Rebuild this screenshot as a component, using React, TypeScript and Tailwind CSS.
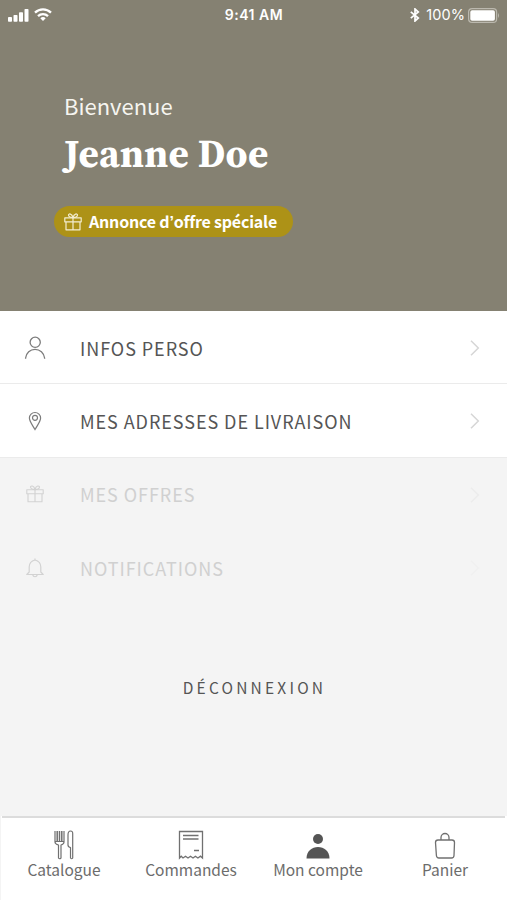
import type { ReactNode } from "react";

const sans = "font-['Noto_Sans_CJK_SC','Noto_Sans',sans-serif]";

const UserIcon = () => (
  <svg width="22" height="24" viewBox="0 0 22 24" fill="none" stroke="#7c7c7c" strokeWidth="1.3" className="block">
    <circle cx="11.2" cy="6.300" r="5.100" />
    <path d="M1.600 22.700V22C2.300 17 6 13.300 11 13.300s8.900 3.700 9.600 8.700v.7" />
  </svg>
);

const PinIcon = () => (
  <svg width="22" height="24" viewBox="0 0 22 24" fill="none" stroke="#7c7c7c" strokeWidth="1.2" className="block">
    <path d="M11 20.500C8.500 16.100 5.400 12.500 5.400 9.100a5.600 5.600 0 0 1 11.200 0c0 3.400-3.100 7-5.600 11.400Z" />
    <circle cx="11" cy="8.800" r="2.500" />
  </svg>
);

const GiftIcon = ({ color, width = 1.1 }: { color: string; width?: number }) => (
  <svg width="18" height="18" viewBox="0 0 18 18" fill="none" stroke={color} strokeWidth={width} strokeLinejoin="round" className="block">
    <path d="M.8 4.800h16.400v4H.8zM2 8.800v8h14v-8M9 4.800v12" />
    <path d="M9 4.600C7 4.600 4.500 3.800 4.500 2.100 4.500.4 8 .2 9 4.600c1-4.400 4.500-4.200 4.500-2.500C13.500 3.800 11 4.600 9 4.600Z" />
  </svg>
);

const BellIcon = () => (
  <svg width="18" height="20" viewBox="0 0 18 20" fill="none" stroke="#d2d2d2" strokeWidth="1.2" strokeLinejoin="round" className="block">
    <path d="M9 .5v1.500M9 2C5.200 3 3.200 5.500 3.200 9V14L.8 16.500h16.400L14.800 14V9C14.800 5.500 12.800 3 9 2ZM6.800 16.800c.4 2.600 4 2.600 4.400 0" />
  </svg>
);

const Chevron = ({ color }: { color: string }) => (
  <svg width="10" height="18" viewBox="0 0 10 18" fill="none" stroke={color} strokeWidth="1.500" className="mt-[2px] block">
    <path d="M1 1.800 8.300 9 1 16.200" />
  </svg>
);

const Row = ({ icon, label, muted = false, arrow }: { icon: ReactNode; label: string; muted?: boolean; arrow: string }) => (
  <div className={`flex h-[73.3px] items-center border-b pr-[27px] ${muted ? "border-transparent text-[#d0d0d0]" : "border-[#ebebeb] bg-white text-[#555]"}`}>
    <div className="flex w-[70px] justify-center pt-px">{icon}</div>
    <span className="ml-[10px] flex-1 pt-[1px] text-[18px] leading-6 tracking-[0.940px]">{label}</span>
    <Chevron color={arrow} />
  </div>
);

const Tab = ({ icon, label }: { icon: ReactNode; label: string }) => (
  <div className="flex w-[127px] shrink-0 flex-col items-center">
    <div className="flex h-[30px] items-center">{icon}</div>
    <span className="-mt-[3px] text-[15.500px] leading-6 whitespace-nowrap">{label}</span>
  </div>
);

export default function App() {
  return (
    <div className={`flex h-[900px] w-[507px] flex-col overflow-hidden bg-[#f4f4f4] ${sans}`}>
      <header className="h-[311px] bg-[#858172] text-white">
        <div className="grid h-[30px] grid-cols-3 items-center pr-[7px] pl-2 font-[Inter,sans-serif]">
          <div className="flex items-center gap-[5px]">
            <svg width="21" height="13" viewBox="0 0 21 13" fill="white">
              <rect x="0" y="8" width="4" height="4.700" rx=".8" />
              <rect x="5.500" y="6" width="4" height="6.700" rx=".8" />
              <rect x="11" y="3.300" width="4" height="9.400" rx=".8" />
              <rect x="16.500" y="0" width="4" height="12.700" rx=".8" />
            </svg>
            <svg width="18" height="13" viewBox="0 0 18 13" fill="none" stroke="white" strokeWidth="2.300" className="-mt-px">
              <path d="M1 4.700a11.500 11.500 0 0 1 16 0M4 8.100a7.200 7.200 0 0 1 10 0" />
              <path d="M6.300 10.200a4 4 0 0 1 5.400 0L9 12.900Z" fill="white" stroke="none" />
            </svg>
          </div>
          <span className="-mt-px text-center text-[14px] font-semibold tracking-[0.500px] whitespace-nowrap">9:41 AM</span>
          <div className="flex items-center justify-end">
            <svg width="10" height="14" viewBox="0 0 10 14" fill="none" stroke="white" strokeWidth="1.700" className="mr-[6px]">
              <path d="M.8 3.800 8.300 10 5 13V1l3.300 3L.8 10.200" />
            </svg>
            <span className="mr-[3px] text-[14.500px] tracking-[0.100px]">100%</span>
            <svg width="32" height="15" viewBox="0 0 32 15">
              <rect x=".6" y=".6" width="28" height="13.800" rx="3.500" fill="none" stroke="#bbb8ae" strokeWidth="1.200" />
              <rect x="2.300" y="2.300" width="24.600" height="10.400" rx="1.800" fill="white" />
              <path d="M30 5v5q2-2.500 0-5" fill="#bbb8ae" />
            </svg>
          </div>
        </div>
        <div className="pt-[59px] pl-[64px]">
          <p className="text-[22px] leading-[32px] text-[#f6f5f0]">Bienvenue</p>
          <h1 className="mt-[11px] font-['Source_Serif_4','Source_Serif_Pro','Noto_Serif_CJK_SC','Liberation_Serif',serif] text-[39px] leading-[44px] font-bold tracking-[0.250px]">Jeanne Doe</h1>
        </div>
        <div className="mt-[30px] ml-[54px] flex h-[31px] w-[239px] items-center rounded-full bg-[#ad9217] pl-[10px]">
          <GiftIcon color="#f3edcf" width={1.2} />
          <span className="ml-[7px] text-[16px] leading-6 font-bold tracking-[-0.200px] whitespace-nowrap">
            Annonce d<span className="font-['Liberation_Sans',sans-serif]">’</span>offre spéciale
          </span>
        </div>
      </header>
      <main className="flex-1">
        <Row icon={<UserIcon />} label="INFOS PERSO" arrow="#d6d6d6" />
        <Row icon={<PinIcon />} label="MES ADRESSES DE LIVRAISON" arrow="#d6d6d6" />
        <Row icon={<GiftIcon color="#d2d2d2" />} label="MES OFFRES" muted arrow="#ececec" />
        <Row icon={<BellIcon />} label="NOTIFICATIONS" muted arrow="#f0f0f0" />
        <button className="mt-[71px] block w-full pl-[2px] text-center text-[15.500px] leading-6 tracking-[3.200px] text-[#555]">DÉCONNEXION</button>
      </main>
      <div className="h-[84px] px-[2px]">
        <nav className="-mr-[3px] -ml-[1px] h-full bg-white text-[#6c6c6c]">
          <div className="mr-[3px] ml-px h-[2px] bg-[#dcdcdc]" />
          <div className="-ml-[0.5px] flex pt-[12px]">
            <Tab
              label="Catalogue"
              icon={
                <svg width="20" height="30" viewBox="0 0 20 30" fill="none" stroke="#707070" strokeWidth="1.200" strokeLinejoin="round">
                  <path d="M1 1v11q0 2 3.500 3v13q1 1.500 2.500 0V15q3-1 3-3V1M1 11.500h9" />
                  <path d="M3.200 1v10.500M5.500 1v10.500M7.800 1v10.500" strokeWidth="1.500" />
                  <path d="M14 15V5q0-4 2.500-4T18.700 4v24q-1 1.500-2.200 0V17.500Q14 17 14 15Z" />
                </svg>
              }
            />
            <Tab
              label="Commandes"
              icon={
                <svg width="26" height="30" viewBox="0 0 26 30" fill="none" stroke="#707070" strokeWidth="1.300">
                  <path d="M1.500 28V1.500h23V28l-2-1.800-2.600 1.800-2.500-1.800-2.400 1.800-2.500-1.800L10 28l-2.500-1.800L5 28l-1.800-1.800Z" />
                  <path d="M5 5.500h15.500M5 9h15.500M16 20.500h5" />
                </svg>
              }
            />
            <Tab
              label="Mon compte"
              icon={
                <svg width="24" height="30" viewBox="0 0 24 30" fill="#555">
                  <circle cx="12" cy="9" r="5" />
                  <path d="M.5 28.500C.5 21 6 17 12 17S23.500 21 23.500 28.500Z" />
                </svg>
              }
            />
            <Tab
              label="Panier"
              icon={
                <svg width="22" height="30" viewBox="0 0 22 30" fill="none" stroke="#707070" strokeWidth="1.300">
                  <path d="M4 10h14q2.500 0 2.500 2.500L20 25.500q-.1 2.500-2.500 2.500H5Q2.600 28 2.400 25.500L1.500 12.500Q1.500 10 4 10ZM7 10V7.500a4 4 0 0 1 8 0V10" />
                </svg>
              }
            />
          </div>
        </nav>
      </div>
    </div>
  );
}
